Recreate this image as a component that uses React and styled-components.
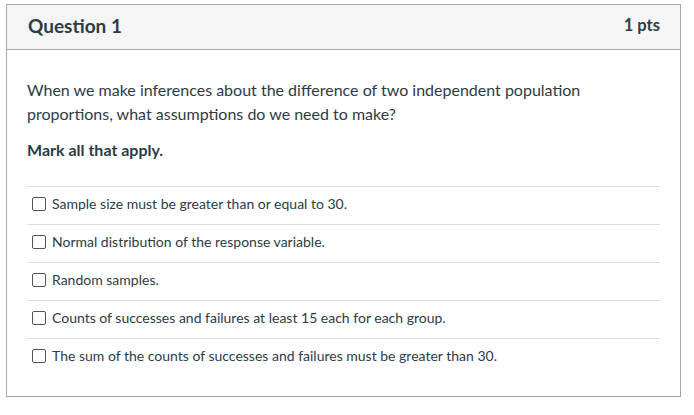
import React from "react";
import styled, { createGlobalStyle } from "styled-components";

const Global = createGlobalStyle`
  body {
    margin: 0;
    padding: 4px 13px 0 6px;
    background: #fff;
    font-family: Lato, "Open Sans", sans-serif;
    color: #2d3b45;
  }
`;

const Card = styled.div`
  border: 1px solid #a9a9a9;
  width: 675px;
  height: 393px;
  box-sizing: border-box;
`;

const Header = styled.div`
  display: flex;
  justify-content: space-between;
  align-items: center;
  height: 45px;
  padding: 0 20px 4px 21px;
  box-sizing: border-box;
  background: #f5f5f5;
  border-bottom: 1px solid #a9a9a9;
`;

const Title = styled.h2`
  margin: 0;
  font-size: 19px;
  font-weight: 700;
  color: #2d3b45;
`;

const Points = styled.span`
  font-size: 16.5px;
  font-weight: 700;
  color: #2d3b45;
`;

const Body = styled.div`
  padding: 28px 20px 0 20px;
`;

const Prompt = styled.p`
  margin: 0 0 12px;
  font-size: 16px;
  line-height: 24px;
  padding-right: 60px;
`;

const Instruction = styled.p`
  margin: 0 0 24px;
  font-size: 16px;
  font-weight: 700;
  line-height: 24px;
`;

const Answers = styled.div`
  display: flex;
  flex-direction: column;
`;

const Answer = styled.label`
  display: flex;
  align-items: center;
  gap: 6px;
  height: 38px;
  box-sizing: border-box;
  padding: 0 0 4px 5px;
  border-top: 1px solid #dcdcdc;
  font-size: 14px;
  color: #2d3b45;
`;

const Box = styled.span`
  width: 12px;
  height: 12px;
  border: 1px solid #555;
  border-radius: 2px;
  background: #fff;
  flex-shrink: 0;
`;

const options = [
  "Sample size must be greater than or equal to 30.",
  "Normal distribution of the response variable.",
  "Random samples.",
  "Counts of successes and failures at least 15 each for each group.",
  "The sum of the counts of successes and failures must be greater than 30.",
];

export default function App() {
  return (
    <>
      <Global />
      <Card>
        <Header>
          <Title>Question 1</Title>
          <Points>1 pts</Points>
        </Header>
        <Body>
          <Prompt>
            When we make inferences about the difference of two independent population
            proportions, what assumptions do we need to make?
          </Prompt>
          <Instruction>Mark all that apply.</Instruction>
          <Answers>
            {options.map((o) => (
              <Answer key={o}>
                <Box />
                {o}
              </Answer>
            ))}
          </Answers>
        </Body>
      </Card>
    </>
  );
}
